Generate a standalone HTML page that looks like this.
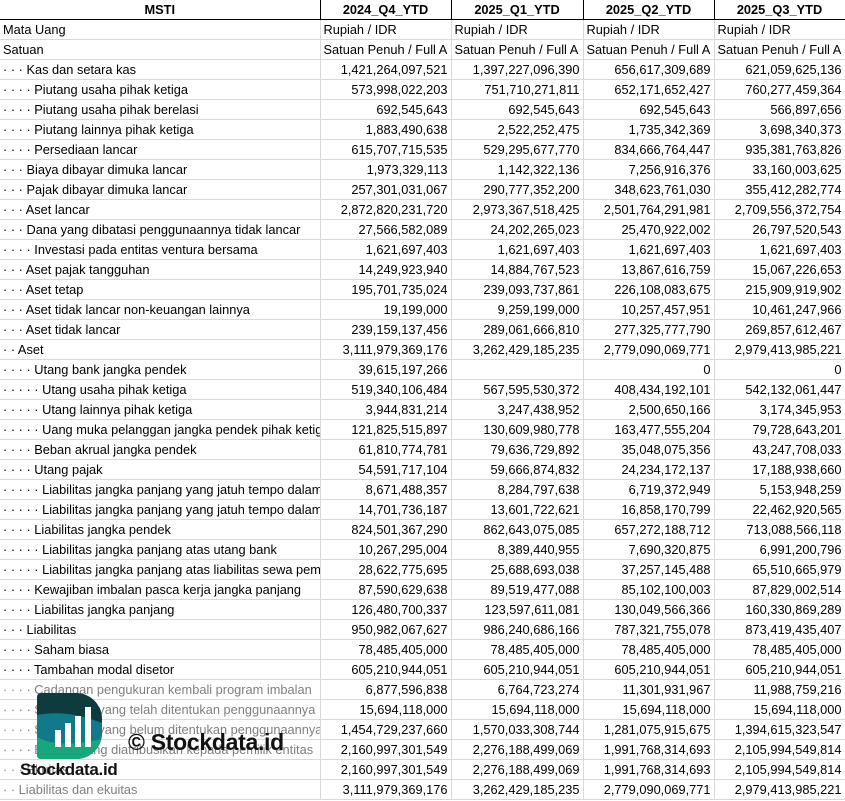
<!DOCTYPE html>
<html><head><meta charset="utf-8">
<style>
html,body{margin:0;padding:0;background:#fff;}
body{width:845px;height:801px;overflow:hidden;position:relative;font-family:"Liberation Sans",sans-serif;font-size:12.8px;color:#000;}
table{border-collapse:collapse;table-layout:fixed;position:absolute;left:0;top:0;width:845px;}
td{height:19px;padding:0 3px;border-right:1px solid #d9d9d9;border-bottom:1px solid #d9d9d9;white-space:nowrap;overflow:hidden;line-height:19px;}
tr.h td{font-weight:bold;text-align:center;border-bottom:1px solid #000;border-right:1px solid #000;}
td.n{text-align:right;}
tr.g td:first-child{color:#7f7f7f;}
.logo{position:absolute;left:37px;top:693px;width:65px;height:66px;border-radius:4px 26px 26px 4px;overflow:hidden;}
</style></head><body>
<table>
<colgroup><col style="width:320px"><col style="width:131px"><col style="width:132px"><col style="width:131px"><col style="width:131px"></colgroup>
<tr class="h"><td>MSTI</td><td>2024_Q4_YTD</td><td>2025_Q1_YTD</td><td>2025_Q2_YTD</td><td>2025_Q3_YTD</td></tr>
<tr><td>Mata Uang</td><td>Rupiah / IDR</td><td>Rupiah / IDR</td><td>Rupiah / IDR</td><td>Rupiah / IDR</td></tr>
<tr><td>Satuan</td><td style="padding-right:0">Satuan Penuh / Full A</td><td style="padding-right:0">Satuan Penuh / Full A</td><td style="padding-right:0">Satuan Penuh / Full A</td><td style="padding-right:0">Satuan Penuh / Full A</td></tr>
<tr><td>· · · Kas dan setara kas</td><td class="n">1,421,264,097,521</td><td class="n">1,397,227,096,390</td><td class="n">656,617,309,689</td><td class="n">621,059,625,136</td></tr>
<tr><td>· · · · Piutang usaha pihak ketiga</td><td class="n">573,998,022,203</td><td class="n">751,710,271,811</td><td class="n">652,171,652,427</td><td class="n">760,277,459,364</td></tr>
<tr><td>· · · · Piutang usaha pihak berelasi</td><td class="n">692,545,643</td><td class="n">692,545,643</td><td class="n">692,545,643</td><td class="n">566,897,656</td></tr>
<tr><td>· · · · Piutang lainnya pihak ketiga</td><td class="n">1,883,490,638</td><td class="n">2,522,252,475</td><td class="n">1,735,342,369</td><td class="n">3,698,340,373</td></tr>
<tr><td>· · · · Persediaan lancar</td><td class="n">615,707,715,535</td><td class="n">529,295,677,770</td><td class="n">834,666,764,447</td><td class="n">935,381,763,826</td></tr>
<tr><td>· · · Biaya dibayar dimuka lancar</td><td class="n">1,973,329,113</td><td class="n">1,142,322,136</td><td class="n">7,256,916,376</td><td class="n">33,160,003,625</td></tr>
<tr><td>· · · Pajak dibayar dimuka lancar</td><td class="n">257,301,031,067</td><td class="n">290,777,352,200</td><td class="n">348,623,761,030</td><td class="n">355,412,282,774</td></tr>
<tr><td>· · · Aset lancar</td><td class="n">2,872,820,231,720</td><td class="n">2,973,367,518,425</td><td class="n">2,501,764,291,981</td><td class="n">2,709,556,372,754</td></tr>
<tr><td>· · · Dana yang dibatasi penggunaannya tidak lancar</td><td class="n">27,566,582,089</td><td class="n">24,202,265,023</td><td class="n">25,470,922,002</td><td class="n">26,797,520,543</td></tr>
<tr><td>· · · · Investasi pada entitas ventura bersama</td><td class="n">1,621,697,403</td><td class="n">1,621,697,403</td><td class="n">1,621,697,403</td><td class="n">1,621,697,403</td></tr>
<tr><td>· · · Aset pajak tangguhan</td><td class="n">14,249,923,940</td><td class="n">14,884,767,523</td><td class="n">13,867,616,759</td><td class="n">15,067,226,653</td></tr>
<tr><td>· · · Aset tetap</td><td class="n">195,701,735,024</td><td class="n">239,093,737,861</td><td class="n">226,108,083,675</td><td class="n">215,909,919,902</td></tr>
<tr><td>· · · Aset tidak lancar non-keuangan lainnya</td><td class="n">19,199,000</td><td class="n">9,259,199,000</td><td class="n">10,257,457,951</td><td class="n">10,461,247,966</td></tr>
<tr><td>· · · Aset tidak lancar</td><td class="n">239,159,137,456</td><td class="n">289,061,666,810</td><td class="n">277,325,777,790</td><td class="n">269,857,612,467</td></tr>
<tr><td>· · Aset</td><td class="n">3,111,979,369,176</td><td class="n">3,262,429,185,235</td><td class="n">2,779,090,069,771</td><td class="n">2,979,413,985,221</td></tr>
<tr><td>· · · · Utang bank jangka pendek</td><td class="n">39,615,197,266</td><td class="n"></td><td class="n">0</td><td class="n">0</td></tr>
<tr><td>· · · · · Utang usaha pihak ketiga</td><td class="n">519,340,106,484</td><td class="n">567,595,530,372</td><td class="n">408,434,192,101</td><td class="n">542,132,061,447</td></tr>
<tr><td>· · · · · Utang lainnya pihak ketiga</td><td class="n">3,944,831,214</td><td class="n">3,247,438,952</td><td class="n">2,500,650,166</td><td class="n">3,174,345,953</td></tr>
<tr><td>· · · · · Uang muka pelanggan jangka pendek pihak ketiga</td><td class="n">121,825,515,897</td><td class="n">130,609,980,778</td><td class="n">163,477,555,204</td><td class="n">79,728,643,201</td></tr>
<tr><td>· · · · Beban akrual jangka pendek</td><td class="n">61,810,774,781</td><td class="n">79,636,729,892</td><td class="n">35,048,075,356</td><td class="n">43,247,708,033</td></tr>
<tr><td>· · · · Utang pajak</td><td class="n">54,591,717,104</td><td class="n">59,666,874,832</td><td class="n">24,234,172,137</td><td class="n">17,188,938,660</td></tr>
<tr><td>· · · · · Liabilitas jangka panjang yang jatuh tempo dalam</td><td class="n">8,671,488,357</td><td class="n">8,284,797,638</td><td class="n">6,719,372,949</td><td class="n">5,153,948,259</td></tr>
<tr><td>· · · · · Liabilitas jangka panjang yang jatuh tempo dalam</td><td class="n">14,701,736,187</td><td class="n">13,601,722,621</td><td class="n">16,858,170,799</td><td class="n">22,462,920,565</td></tr>
<tr><td>· · · · Liabilitas jangka pendek</td><td class="n">824,501,367,290</td><td class="n">862,643,075,085</td><td class="n">657,272,188,712</td><td class="n">713,088,566,118</td></tr>
<tr><td>· · · · · Liabilitas jangka panjang atas utang bank</td><td class="n">10,267,295,004</td><td class="n">8,389,440,955</td><td class="n">7,690,320,875</td><td class="n">6,991,200,796</td></tr>
<tr><td>· · · · · Liabilitas jangka panjang atas liabilitas sewa pem</td><td class="n">28,622,775,695</td><td class="n">25,688,693,038</td><td class="n">37,257,145,488</td><td class="n">65,510,665,979</td></tr>
<tr><td>· · · · Kewajiban imbalan pasca kerja jangka panjang</td><td class="n">87,590,629,638</td><td class="n">89,519,477,088</td><td class="n">85,102,100,003</td><td class="n">87,829,002,514</td></tr>
<tr><td>· · · · Liabilitas jangka panjang</td><td class="n">126,480,700,337</td><td class="n">123,597,611,081</td><td class="n">130,049,566,366</td><td class="n">160,330,869,289</td></tr>
<tr><td>· · · Liabilitas</td><td class="n">950,982,067,627</td><td class="n">986,240,686,166</td><td class="n">787,321,755,078</td><td class="n">873,419,435,407</td></tr>
<tr><td>· · · · Saham biasa</td><td class="n">78,485,405,000</td><td class="n">78,485,405,000</td><td class="n">78,485,405,000</td><td class="n">78,485,405,000</td></tr>
<tr><td>· · · · Tambahan modal disetor</td><td class="n">605,210,944,051</td><td class="n">605,210,944,051</td><td class="n">605,210,944,051</td><td class="n">605,210,944,051</td></tr>
<tr class="g"><td>· · · · Cadangan pengukuran kembali program imbalan</td><td class="n">6,877,596,838</td><td class="n">6,764,723,274</td><td class="n">11,301,931,967</td><td class="n">11,988,759,216</td></tr>
<tr class="g"><td>· · · · Saldo laba yang telah ditentukan penggunaannya</td><td class="n">15,694,118,000</td><td class="n">15,694,118,000</td><td class="n">15,694,118,000</td><td class="n">15,694,118,000</td></tr>
<tr class="g"><td>· · · · Saldo laba yang belum ditentukan penggunaannya</td><td class="n">1,454,729,237,660</td><td class="n">1,570,033,308,744</td><td class="n">1,281,075,915,675</td><td class="n">1,394,615,323,547</td></tr>
<tr class="g"><td>· · · · Ekuitas yang diatribusikan kepada pemilik entitas</td><td class="n">2,160,997,301,549</td><td class="n">2,276,188,499,069</td><td class="n">1,991,768,314,693</td><td class="n">2,105,994,549,814</td></tr>
<tr class="g"><td>· · · Ekuitas</td><td class="n">2,160,997,301,549</td><td class="n">2,276,188,499,069</td><td class="n">1,991,768,314,693</td><td class="n">2,105,994,549,814</td></tr>
<tr class="g"><td>· · Liabilitas dan ekuitas</td><td class="n">3,111,979,369,176</td><td class="n">3,262,429,185,235</td><td class="n">2,779,090,069,771</td><td class="n">2,979,413,985,221</td></tr>
</table>
<div class="logo">
<svg width="65" height="66" viewBox="0 0 65 66">
<rect x="0" y="0" width="65" height="66" fill="#0e3b3d"/>
<path d="M0 22 Q30 16 65 30 L65 66 L0 66 Z" fill="#10798a"/>
<path d="M0 44 Q20 56 65 46 L65 66 L0 66 Z" fill="#17a77a"/>
<rect x="18" y="37" width="6" height="17" fill="#fff"/>
<rect x="28" y="30" width="6" height="24" fill="#fff"/>
<rect x="38" y="23" width="6" height="31" fill="#fff"/>
<rect x="48" y="14" width="6" height="40" fill="#fff"/>
</svg>
</div>
<div style="position:absolute;left:128px;top:729px;font-size:23px;font-weight:bold;color:#111;letter-spacing:-0.3px;">© Stockdata.id</div>
<div style="position:absolute;left:20px;top:760px;font-size:17px;font-weight:bold;color:#111;letter-spacing:-0.3px;">Stockdata.id</div>
</body></html>
